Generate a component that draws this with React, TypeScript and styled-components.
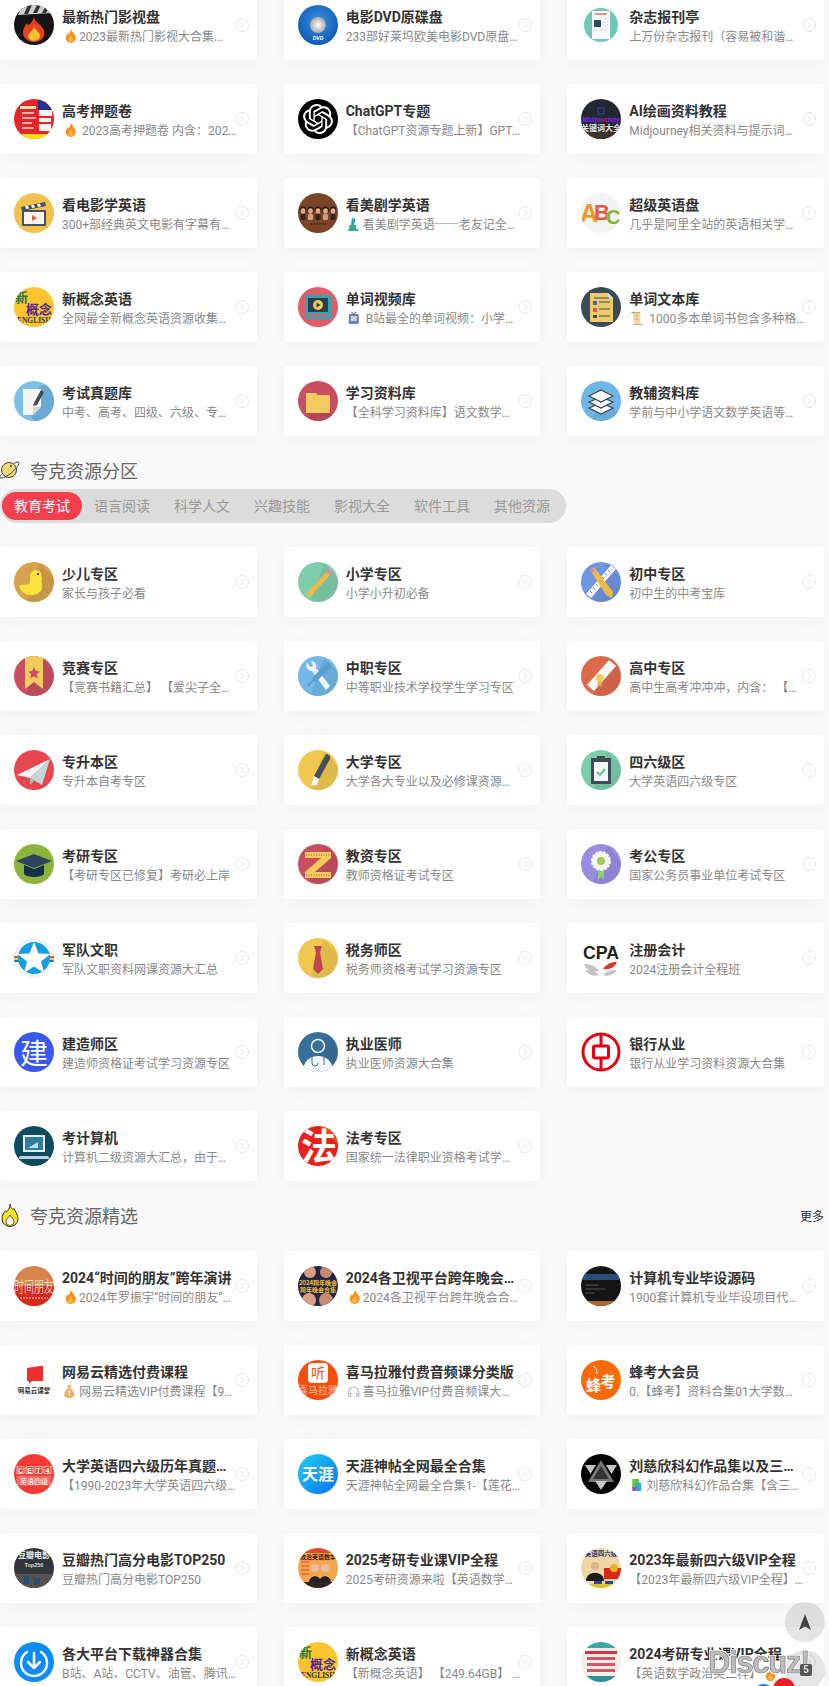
import React from 'react';
import styled, { createGlobalStyle } from 'styled-components';
import { SiOpenai } from 'react-icons/si';

const GlobalStyle = createGlobalStyle`
  html, body {
    margin: 0;
    height: 1686px;
    overflow: hidden;
    background: #f9f9f9;
    font-family: Roboto, "Noto Sans CJK SC", sans-serif;
  }
`;

const Page = styled.div`
  width: 824px;
  margin-top: -10px;
`;

const Grid = styled.div<{ $top?: number }>`
  display: grid;
  grid-template-columns: repeat(3, 1fr);
  column-gap: 27px;
  row-gap: 24px;
  margin-top: ${(p) => p.$top ?? 0}px;
`;

const Card = styled.a`
  display: flex;
  align-items: center;
  box-sizing: border-box;
  height: 70px;
  padding: 0 8px 0 14px;
  background: #fff;
  border-radius: 4px;
  box-shadow: 0 4px 16px rgba(0, 0, 0, 0.035);
`;

const Logo = styled.svg`
  flex: none;
  width: 40px;
  height: 40px;
  border-radius: 50%;
  margin-right: 8px;
`;

const Body = styled.div`
  flex: none;
  width: 175px;
  margin-right: -4px;
  padding-top: 4px;
`;

const Title = styled.div`
  font-size: 14px;
  line-height: 20px;
  font-weight: 700;
  color: #333;
  white-space: nowrap;
  overflow: hidden;
  text-overflow: ellipsis;
`;

const Desc = styled.div`
  font-size: 12px;
  line-height: 20px;
  color: #888;
  white-space: nowrap;
  overflow: hidden;
  text-overflow: ellipsis;
`;

const Emoji = styled.svg`
  display: inline-block;
  width: 17px;
  height: 14px;
  vertical-align: -2px;
`;

const Chevron = styled.svg`
  flex: none;
  width: 14px;
  height: 14px;
  margin-left: auto;
`;

const Heading = styled.div`
  display: flex;
  align-items: center;
  height: 20px;
  margin-top: 24px;
`;

const HeadingIcon = styled.svg`
  flex: none;
  width: 20px;
  height: 20px;
  margin-right: 10px;
  overflow: visible;
`;

const HeadingText = styled.span`
  font-size: 18px;
  color: #666;
`;

const More = styled.a`
  margin-left: auto;
  font-size: 12px;
  color: #333;
`;

const Tabs = styled.div`
  display: inline-flex;
  margin-top: 9px;
  padding: 3px 3.5px 3px 2px;
  background: #dcdcdc;
  border-radius: 17px;
  vertical-align: top;
`;

const Tab = styled.a<{ $active?: boolean }>`
  padding: 0 12px;
  height: 28px;
  line-height: 28px;
  font-size: 14px;
  border-radius: 14px;
  color: ${(p) => (p.$active ? '#fff' : '#999')};
  background: ${(p) => (p.$active ? '#f43f4f' : 'transparent')};
`;

const FloatCircle = styled.div<{ $top: number }>`
  position: fixed;
  right: 4px;
  top: ${(p) => p.$top}px;
  width: 40px;
  height: 40px;
  border-radius: 50%;
  background: rgba(0, 0, 0, 0.1);
  display: flex;
  align-items: center;
  justify-content: center;
`;

const Dot = styled.div<{ $left: number; $top: number; $size: number; $color: string }>`
  position: fixed;
  left: ${(p) => p.$left}px;
  top: ${(p) => p.$top}px;
  width: ${(p) => p.$size}px;
  height: ${(p) => p.$size}px;
  border-radius: 50%;
  background: ${(p) => p.$color};
`;

const Watermark = styled.div`
  position: fixed;
  left: 708px;
  top: 1643px;
  font-family: "Liberation Sans", sans-serif;
  font-size: 31px;
  line-height: 40px;
  font-weight: 700;
  letter-spacing: -1.3px;
  color: #bdbdbd;
  -webkit-text-stroke: 0.6px #777;
  text-shadow: 1px 1px 0 #fff, -1px -1px 0 #fff, 1px -1px 0 #fff, -1px 1px 0 #fff;
`;

const WatermarkBadge = styled.div`
  position: fixed;
  left: 800px;
  top: 1664px;
  width: 12px;
  height: 12px;
  border-radius: 2px;
  background: #555;
  color: #ddd;
  font: 700 10px/12px "Liberation Sans", sans-serif;
  text-align: center;
`;

const FireMark = styled.svg`
  position: fixed;
  left: 765px;
  top: 1668px;
  width: 11px;
  height: 13px;
`;

const cjk = '"Noto Sans CJK SC", sans-serif';
const Shade = () => <path d="M26 2L40 16V40H12Z" fill="#000" opacity=".07" />;

const flame = (
  <>
    <path d="M5.5 0C6.5 3 10.5 5 10.5 9A5 5 0 0 1 .5 9C.5 7 1.5 6 2.5 4.2 3.2 5 3.8 5 4.2 4 4.8 3 5.5 1.5 5.5 0Z" fill="#f7901e" />
    <path d="M5.5 6C6 7.5 8 8.5 8 10.5A2.5 2.5 0 0 1 3 10.5C3 9 5 8 5.5 6Z" fill="#fcb445" />
  </>
);

const logos: Record<string, React.ReactNode> = {
  clapper: (
    <>
      <rect width="40" height="40" fill="#141414" />
      <path d="M4 10L8 0H36L38 8Z" fill="#cfcfcf" />
      <path d="M10 9L14 0H18L14 9ZM19 8L23 0H27L23 8ZM28 8L32 0H36L32 8Z" fill="#333" />
      <path d="M20 12C21 18 27 19 30 25 32 33 26 37 20 37S9 33 9 27C9 23 11 21 13 18 14 20 15 20 16 19 18 17 19 15 20 12Z" fill="#e8401c" />
      <path d="M20 22C21 25 26 27 26 31A6 5 0 0 1 14 31C14 28 19 26 20 22Z" fill="#fbc02d" />
    </>
  ),
  dvd: (
    <>
      <defs>
        <radialGradient id="dvdbg" cx=".5" cy=".4" r=".65">
          <stop offset="0" stopColor="#3b8fe0" />
          <stop offset="1" stopColor="#0a56b0" />
        </radialGradient>
        <radialGradient id="dvdhub">
          <stop offset="0" stopColor="#fff" />
          <stop offset="1" stopColor="#a9a9a9" />
        </radialGradient>
      </defs>
      <rect width="40" height="40" fill="url(#dvdbg)" />
      <circle cx="20" cy="20" r="8" fill="url(#dvdhub)" />
      <text x="20" y="35" textAnchor="middle" fontSize="5" fontWeight="700" fontStyle="italic" fill="#fff" fontFamily="Liberation Sans">DVD</text>
    </>
  ),
  news: (
    <>
      <rect width="40" height="40" fill="#fff" />
      <circle cx="20" cy="20" r="17" fill="#6ec8b9" />
      <rect x="11" y="6" width="18" height="28" fill="#fafafa" />
      <rect x="14" y="8" width="12" height="2" fill="#ef8d7e" />
      <rect x="13" y="15" width="7" height="7" fill="#2f4858" />
      <path d="M22 14h5M22 17h5M22 20h5M13 25h14" stroke="#d8e0e6" />
    </>
  ),
  poster: (
    <>
      <rect width="40" height="40" fill="#e8232a" />
      <rect x="24" width="16" height="11" fill="#27308a" />
      <path d="M25 11h13v6H25zM25 19h12v4H25zM25 25h12v7H25z" fill="#f3f3f3" />
      <path d="M6 7h16v3H6z" fill="#fde7a0" />
      <path d="M8 13h12v2H8zM8 18h14v2H8zM8 23h10v2H8zM8 28h12v2H8z" fill="#f8b0a8" />
      <rect x="6" y="35" width="28" height="5" fill="#ffe000" />
    </>
  ),
  gpt: (
    <>
      <rect width="40" height="40" fill="#000" />
      <SiOpenai x="5" y="5" size="30" color="#fff" />
    </>
  ),
  mj: (
    <>
      <rect width="40" height="40" fill="#222730" />
      <rect y="30" width="40" height="10" fill="#3a342c" />
      <path d="M17 9h6v6h-6z" fill="none" stroke="#3546b8" />
      <text x="20" y="23" textAnchor="middle" fontSize="7" fontWeight="700" fill="#a01de0" fontFamily="Liberation Sans">Midjourney</text>
      <text x="20" y="32" textAnchor="middle" fontSize="8" fontWeight="700" fill="#eee" fontFamily={cjk}>关键词大全</text>
    </>
  ),
  film: (
    <>
      <rect width="40" height="40" fill="#efc24e" />
      <rect x="8" y="17" width="24" height="16" rx="1" fill="#45525e" />
      <rect x="10" y="19" width="20" height="12" fill="#fdf6ec" />
      <path d="M18 22l5 3-5 3Z" fill="#e8534a" />
      <path d="M7 14l24-5 1 4-24 5Z" fill="#45525e" />
      <path d="M11 13l3-.6 1 3-3 .6ZM17 12l3-.6 1 3-3 .6ZM23 11l3-.6 1 3-3 .6Z" fill="#f4f4f4" />
    </>
  ),
  friends: (
    <>
      <rect width="40" height="40" fill="#7b4427" />
      {[5, 12.5, 20, 27.5, 35].map((x, i) => (
        <g key={x}>
          <circle cx={x} cy={17} r={3.4} fill="#2a1a12" />
          <ellipse cx={x} cy={18} rx={2.4} ry={2.800} fill="#dcab84" />
          <rect x={x - 2.600} y={21} width={5.200} height={6} rx={1.500} fill={i % 2 ? '#c9a27c' : '#3c241a'} />
        </g>
      ))}
      <path d="M12 31h16" stroke="#2a1a12" strokeDasharray="2 1" />
    </>
  ),
  abc: (
    <>
      <rect width="40" height="40" fill="#f3f3f3" />
      <text x="-1" y="29" fontSize="25" fontWeight="700" fill="#f0962a" fontFamily="Liberation Sans">A</text>
      <text x="13" y="27" fontSize="22" fontWeight="700" fill="#e8584a" fontFamily="Liberation Sans">B</text>
      <text x="25" y="31" fontSize="20" fontWeight="700" fill="#7cbb2c" fontFamily="Liberation Sans">C</text>
    </>
  ),
  nce: (
    <>
      <rect width="40" height="40" fill="#fcc52f" />
      <text x="1" y="15" fontSize="13" fontWeight="700" fill="#1f7a4a" fontFamily={cjk}>新</text>
      <text x="12" y="27" fontSize="13" fontWeight="700" fill="#4a2a8a" fontFamily={cjk}>概念</text>
      <text x="20" y="36" textAnchor="middle" fontSize="7.500" fontWeight="700" fill="#333" fontFamily="Liberation Serif">ENGLISH</text>
    </>
  ),
  wordvideo: (
    <>
      <rect width="40" height="40" fill="#e15c6a" />
      <rect x="7" y="8" width="26" height="24" rx="1" fill="#36a3ad" />
      <rect x="10" y="11" width="20" height="14" fill="#2b3e50" />
      <circle cx="20" cy="18" r="5" fill="#f1c959" />
      <path d="M18.5 15.5l4 2.5-4 2.5Z" fill="#2b3e50" />
      <path d="M10 28h20" stroke="#e15c6a" strokeWidth="2" />
    </>
  ),
  wordtext: (
    <>
      <rect width="40" height="40" fill="#3a4a57" />
      <path d="M9 6h18l5 5v24H9Z" fill="#f0ca66" />
      <path d="M27 6l5 5h-5Z" fill="#cfe3f1" />
      <path d="M12 14h4v4h-4z" fill="#3a6ea8" />
      <path d="M12 21h4v4h-4z" fill="#e8534a" />
      <path d="M12 28h4v3h-4z" fill="#33495c" />
      <path d="M18 15h11M18 22h11M18 29h11M13 11h15" stroke="#33495c" strokeWidth="1.2" />
    </>
  ),
  exam: (
    <>
      <rect width="40" height="40" fill="#7cc0e8" />
      <path d="M14 30L26 4H40V40H20Z" fill="#6aa9d4" />
      <path d="M9 8h18v18l-8 8H9Z" fill="#f5f5f5" />
      <path d="M19 34v-8h8Z" fill="#d5d5d5" />
      <path d="M20 22l7-13 3 2-7 13-4 1Z" fill="#3e4850" />
    </>
  ),
  folder: (
    <>
      <rect width="40" height="40" fill="#c94f60" />
      <path d="M8 30L32 32 40 40H14Z" fill="#000" opacity=".1" />
      <path d="M8 12h10l2 2h12v18H8Z" fill="#f3ca5e" />
    </>
  ),
  books: (
    <>
      <rect width="40" height="40" fill="#6eb6e6" />
      <path d="M20 20L40 32V40H10Z" fill="#000" opacity=".06" />
      <g fill="#f5f7f8" stroke="#3e4850" strokeWidth="1.200">
        <path d="M8 27l12-5 12 5-12 6Z" />
        <path d="M8 21l12-5 12 5-12 6Z" />
        <path d="M8 15l12-6 12 6-12 6Z" />
      </g>
    </>
  ),
  duck: (
    <>
      <rect width="40" height="40" fill="#d6a24e" />
      <Shade />
      <path d="M5 24C7 22 11 23 15 22 17 20 16 17 16 14A6 6 0 0 1 28 14C28 17 27 19 28 22 30 30 22 34 15 33 10 32 6 28 5 24Z" fill="#fbe33b" />
      <path d="M27 12l5 1-4 3Z" fill="#ee7b2c" />
      <circle cx="24" cy="12" r="1" fill="#222" />
    </>
  ),
  pencil: (
    <>
      <rect width="40" height="40" fill="#7fcdab" />
      <Shade />
      <path d="M28 10l4 3-18 20-6 3 2-6Z" fill="#ecbb45" />
      <path d="M28 10l3-3 4 3-3 3Z" fill="#e889a8" />
    </>
  ),
  ruler: (
    <>
      <rect width="40" height="40" fill="#6e95e2" />
      <Shade />
      <path d="M30 3l5 4L10 36l-5-4Z" fill="#f4f4f4" />
      <path d="M27 8l2 2M24 11.500l2 2M21 15l2 2M18 18.500l2 2M15 22l2 2M12 25.500l2 2M9 29l2 2" stroke="#7a8aa0" />
      <path d="M9 8l4-3 19 25-1 6-6-3Z" fill="#ecbb45" />
      <path d="M9 8l3-2 2 3-3 2Z" fill="#e889a8" />
    </>
  ),
  medal: (
    <>
      <rect width="40" height="40" fill="#c94f60" />
      <Shade />
      <path d="M11 0h18v33l-9-7-9 7Z" fill="#f3ca5e" />
      <path d="M20 11l1.8 4 4.2.4-3.2 2.8 1 4.2-3.8-2.2-3.8 2.2 1-4.2-3.2-2.8 4.2-.4Z" fill="#c94f60" />
    </>
  ),
  tools: (
    <>
      <rect width="40" height="40" fill="#72b9e9" />
      <Shade />
      <path d="M9 6l3 5 3-1-2-5C17 5 19 9 18 12L32 30 28 34 14 15C10 15 7 11 9 6Z" fill="#f5f5f5" />
      <path d="M30 6l4 4-16 16-3-1-4 6-2-2 6-5-1-2Z" fill="#5a9dd0" />
    </>
  ),
  diploma: (
    <>
      <rect width="40" height="40" fill="#de6a4c" />
      <Shade />
      <path d="M28 4l7 6L13 35l-7-6Z" fill="#fbfbfb" />
      <circle cx="19" cy="22" r="4" fill="#f3ca5e" />
      <path d="M17 25l-1 6 3-2 2 2-1-6Z" fill="#ecbb45" />
    </>
  ),
  plane: (
    <>
      <rect width="40" height="40" fill="#e8464e" />
      <path d="M3 25L36 9 16 28Z" fill="#f2f6f5" />
      <path d="M16 28L36 9 28 35Z" fill="#bfd9d8" />
      <path d="M16 28v7l4-4Z" fill="#9cc0bf" />
    </>
  ),
  pen: (
    <>
      <rect width="40" height="40" fill="#f0c850" />
      <Shade />
      <path d="M28 4c3 0 5 2 4 5L21 29l-5-3Z" fill="#46505c" />
      <path d="M16 26l5 3-2 6-6 1Z" fill="#f7f7f7" />
    </>
  ),
  clip: (
    <>
      <rect width="40" height="40" fill="#7bcca9" />
      <Shade />
      <rect x="10" y="8" width="20" height="26" fill="#3e4a56" />
      <rect x="13" y="12" width="14" height="19" fill="#f6f7f7" />
      <rect x="16" y="6" width="8" height="4" fill="#3e4a56" />
      <path d="M16 22l3 3 5-6" fill="none" stroke="#62c39a" strokeWidth="2" />
    </>
  ),
  cap: (
    <>
      <rect width="40" height="40" fill="#8db43a" />
      <path d="M2 17L20 10 38 17 20 24Z" fill="#2c4560" />
      <path d="M10 21v9c3 4 17 4 20 0v-9l-10 4Z" fill="#16304a" />
    </>
  ),
  zed: (
    <>
      <rect width="40" height="40" fill="#c94f60" />
      <Shade />
      <path d="M7 8h26v6L17 28h16v6H7v-6L23 14H7Z" fill="#f3ca5e" />
      <path d="M8 11h24M8 31h24" stroke="#8a5a30" strokeWidth="1" strokeDasharray="1 1.5" />
    </>
  ),
  flower: (
    <>
      <rect width="40" height="40" fill="#9b8be2" />
      <Shade />
      <path d="M17 24v12l3-3 3 3V24Z" fill="#8ecb7a" />
      <circle cx="20" cy="17" r="9" fill="#f6f6f6" stroke="#f6f6f6" strokeWidth="2" strokeDasharray="3 1" />
      <circle cx="20" cy="17" r="4" fill="#9fc95a" />
    </>
  ),
  star: (
    <>
      <rect width="40" height="40" fill="#f3f3f3" />
      <path d="M0 18h40v2H0z" fill="#e8534a" />
      <path d="M0 20h40v2H0z" fill="#f3ca5e" />
      <path d="M0 22h40v2H0z" fill="#2f6fb0" />
      <circle cx="20" cy="20" r="16" fill="#149fe0" />
      <path d="M20 4l4.500 11.500 12 .6-9.500 7.500 3.200 11.400L20 28.500 9.800 35l3.200-11.400-9.500-7.500 12-.6Z" fill="#fff" />
    </>
  ),
  tie: (
    <>
      <rect width="40" height="40" fill="#f0c850" />
      <Shade />
      <path d="M16 8h8l-2 6 3 17-5 5-5-5 3-17Z" fill="#c0444f" />
    </>
  ),
  cpa: (
    <>
      <rect width="40" height="40" fill="#fff" />
      <text x="20" y="21" textAnchor="middle" fontSize="18" fontWeight="700" fill="#222" fontFamily="Liberation Sans" textLength="36" lengthAdjust="spacingAndGlyphs">CPA</text>
      <path d="M22 31c4-6 9-7 14-7-2 5-7 8-14 7Z" fill="#d8362a" />
      <path d="M18 33C14 27 9 26 3 26c2 6 8 9 15 7ZM22 37c4-4 8-5 14-5-2 4-8 7-14 5ZM18 37c-4-4-8-5-14-5 2 4 8 7 14 5Z" fill="#c4c4c4" />
    </>
  ),
  jian: (
    <>
      <rect width="40" height="40" fill="#3858ee" />
      <path d="M0 0h10L0 14Z" fill="#f3ca5e" />
      <text x="20" y="32" textAnchor="middle" fontSize="28" fill="#fff" fontFamily={cjk}>建</text>
    </>
  ),
  doctor: (
    <>
      <rect width="40" height="40" fill="#36709c" />
      <Shade />
      <circle cx="20" cy="14" r="6.500" fill="#36709c" stroke="#f2f5f7" strokeWidth="1.500" />
      <path d="M5 40c0-12 8-16 15-16s15 4 15 16Z" fill="#f4f6f8" />
      <path d="M14 25v6a3 3 0 0 0 6 0M26 25v8" stroke="#36709c" fill="none" />
    </>
  ),
  boc: (
    <>
      <rect width="40" height="40" fill="#fff" />
      <circle cx="20" cy="20" r="18" fill="none" stroke="#e60012" strokeWidth="3" />
      <path d="M20 2v36" stroke="#e60012" strokeWidth="3" />
      <rect x="12.500" y="14" width="15" height="12" rx="1.500" fill="#fff" stroke="#e60012" strokeWidth="3" />
    </>
  ),
  pc: (
    <>
      <rect width="40" height="40" fill="#0e4a60" />
      <rect x="9" y="9" width="22" height="17" fill="#e6eef2" />
      <rect x="11" y="11" width="18" height="13" fill="#2e7d9c" />
      <path d="M14 22l10-6v6Z" fill="#bcdde9" />
      <path d="M6 30h28l2 3H4Z" fill="#b7d2dc" />
    </>
  ),
  law: (
    <>
      <rect width="40" height="40" fill="#e8201c" />
      <path d="M22 0h18v18Z" fill="#f34a1c" />
      <text x="21" y="34" textAnchor="middle" fontSize="36" fontWeight="700" fill="#fff" fontFamily={cjk}>法</text>
    </>
  ),
  timefriend: (
    <>
      <rect width="40" height="40" fill="#d8844c" />
      <rect y="20" width="40" height="20" fill="#d8281c" />
      <text x="20" y="26" textAnchor="middle" fontSize="15" fontWeight="300" fill="#fff" fontFamily={cjk} textLength="40" lengthAdjust="spacingAndGlyphs">时间朋友</text>
      <path d="M6 32h28" stroke="#fbd4c4" strokeDasharray="2 1" />
    </>
  ),
  gala: (
    <>
      <rect width="40" height="40" fill="#23264c" />
      <circle cx="12" cy="6" r="6" fill="#d8a080" />
      <circle cx="28" cy="6" r="6" fill="#c88a70" />
      <circle cx="11" cy="34" r="7" fill="#d8a080" />
      <circle cx="28" cy="34" r="7" fill="#c88a70" />
      <text x="20" y="19" textAnchor="middle" fontSize="6" fontWeight="700" fill="#f3c12e" fontFamily={cjk}>2024跨年晚会</text>
      <text x="20" y="26" textAnchor="middle" fontSize="6" fontWeight="700" fill="#f3c12e" fontFamily={cjk}>跨年晚会合集</text>
    </>
  ),
  code: (
    <>
      <rect width="40" height="40" fill="#141414" />
      <rect y="8" width="40" height="6" fill="#26507a" />
      <path d="M4 19h14M4 23h20M4 27h10" stroke="#555" />
      <rect y="35" width="40" height="5" fill="#a86a2a" />
    </>
  ),
  netease: (
    <>
      <rect width="40" height="40" fill="#fff" />
      <circle cx="20" cy="20" r="19.500" fill="none" stroke="#f2f2f2" />
      <path d="M13 8l13-2h3v15H18l-3 3v-3h-2Z" fill="#ef2d2d" />
      <text x="20" y="33" textAnchor="middle" fontSize="6.500" fontWeight="700" fill="#333" fontFamily={cjk}>网易云课堂</text>
    </>
  ),
  xima: (
    <>
      <rect width="40" height="40" fill="#fb4b0e" />
      <rect x="10" y="3" width="20" height="20" rx="4" fill="#fff" />
      <text x="20" y="18" textAnchor="middle" fontSize="14" fill="#fb4b0e" fontFamily={cjk}>听</text>
      <text x="20" y="34" textAnchor="middle" fontSize="10" fill="#ffc9b0" fontFamily={cjk}>喜马拉雅</text>
    </>
  ),
  feng: (
    <>
      <rect width="40" height="40" fill="#fa6a05" />
      <path d="M12 6c3 1 4 4 4 8" fill="none" stroke="#fff" />
      <text x="12.500" y="31" textAnchor="middle" fontSize="15" fontWeight="700" fill="#fff" fontFamily={cjk}>蜂</text>
      <text x="27" y="27" textAnchor="middle" fontSize="15" fontWeight="700" fill="#fff" fontFamily={cjk}>考</text>
    </>
  ),
  cet: (
    <>
      <rect width="40" height="40" fill="#f53a33" />
      <path d="M3 12.500h7v7H3zM12 12.500h7v7h-7zM21 12.500h7v7h-7zM30 12.500h7v7h-7z" fill="none" stroke="#fff" strokeWidth=".7" />
      {['C', 'E', 'T', '4'].map((c, i) => (
        <text key={c} x={6.500 + i * 9} y={18.500} textAnchor="middle" fontSize="7" fontWeight="700" fill="#fff" fontFamily="Liberation Sans">{c}</text>
      ))}
      <rect x="3" y="22" width="34" height="9" fill="#fbd8d4" opacity=".3" stroke="#fff" strokeWidth=".6" />
      <text x="20" y="29.500" textAnchor="middle" fontSize="7" fill="#fff" fontFamily={cjk}>英语四级</text>
    </>
  ),
  tianya: (
    <>
      <defs>
        <linearGradient id="tianyabg" x1="0" y1="0" x2="1" y2="1">
          <stop offset="0" stopColor="#1fd0f0" />
          <stop offset="1" stopColor="#0a6ff5" />
        </linearGradient>
      </defs>
      <rect width="40" height="40" fill="url(#tianyabg)" />
      <text x="20" y="26" textAnchor="middle" fontSize="16" fontWeight="700" fill="#fff" fontFamily={cjk}>天涯</text>
    </>
  ),
  liu: (
    <>
      <rect width="40" height="40" fill="#000" />
      <path d="M20 6L33 28H7Z" fill="#777" />
      <path d="M20 12L28 25H12Z" fill="#333" />
      <path d="M4 11h11L9.500 20ZM36 11H25L30.500 20ZM14 27h12L20 36Z" fill="#c4c4c4" />
    </>
  ),
  douban: (
    <>
      <rect width="40" height="40" fill="#33363c" />
      <rect y="26" width="40" height="14" fill="#55534e" />
      <path d="M10 28h5v8h-5zM20 30h6v7h-6z" fill="#294e7e" />
      <text x="20" y="10" textAnchor="middle" fontSize="8" fontWeight="700" fill="#eee" fontFamily={cjk}>豆瓣电影</text>
      <text x="20" y="19" textAnchor="middle" fontSize="5.500" fontWeight="700" fill="#ddd" fontFamily="Liberation Sans">Top250</text>
    </>
  ),
  ky25: (
    <>
      <rect width="40" height="40" fill="#f4a550" />
      <rect width="40" height="5" fill="#e0472c" />
      <text x="20" y="11" textAnchor="middle" fontSize="6" fontWeight="700" fill="#3a1a10" fontFamily={cjk}>政治英语数学</text>
      <path d="M3 14h8M3 18h8M3 22h8M3 26h8" stroke="#e0472c" />
      <circle cx="17" cy="20" r="4" fill="#e8bd9a" />
      <circle cx="27" cy="20" r="4" fill="#e8bd9a" />
      <path d="M11 35c0-9 12-9 12 0ZM21 35c0-9 12-9 12 0Z" fill="#222" />
      <rect y="34" width="40" height="6" fill="#2c2626" />
    </>
  ),
  ky6: (
    <>
      <rect width="40" height="40" fill="#efd6a8" />
      <text x="20" y="8" textAnchor="middle" fontSize="6.500" fontWeight="700" fill="#2c3a6a" fontFamily={cjk}>英语四六级</text>
      <circle cx="14" cy="18" r="4" fill="#e0b088" />
      <path d="M5 33c0-11 18-11 18 0Z" fill="#1c1c1c" />
      <rect x="23" y="20" width="17" height="11" fill="#d8281c" />
      <circle cx="33" cy="20" r="4" fill="#e3b32a" />
      <path d="M13 33h8v3h-8zM24 33h8v3h-8z" fill="#2c4a9a" />
      <rect y="36" width="40" height="4" fill="#e3c02a" />
    </>
  ),
  download: (
    <>
      <rect width="40" height="40" fill="#0d8cf8" />
      <path d="M13 10a13 13 0 1 0 14 0" fill="none" stroke="#fff" strokeWidth="2.500" strokeLinecap="round" />
      <path d="M20 11v15M14 20l6 6 6-6" fill="none" stroke="#fff" strokeWidth="2.500" strokeLinecap="round" strokeLinejoin="round" />
    </>
  ),
  ky24: (
    <>
      <rect width="40" height="40" fill="#f4ece6" />
      <rect width="40" height="6" fill="#43a6a8" />
      <path d="M4 9h32v3H4z" fill="#c8374a" />
      <path d="M6 15h28v3H6zM6 21h28v3H6zM6 27h28v3H6z" fill="#d0566a" />
      <rect y="34" width="40" height="6" fill="#2f8f96" />
    </>
  ),
};

const emojis: Record<string, React.ReactNode> = {
  fire: <g transform="translate(3)">{flame}</g>,
  statue: (
    <g fill="#35a79a">
      <path d="M6 0l1 2 2-1v3l-1 2v2h2v5H3V8h2V5Z" />
      <rect x="2" y="12" width="10" height="2" />
    </g>
  ),
  tv: (
    <>
      <rect x="2.500" y="3" width="10" height="10" rx="1.500" fill="#6a7fae" />
      <rect x="4.500" y="5" width="6" height="5" fill="#c8d4e6" />
      <path d="M5 1l2.500 2L10 1" stroke="#556" fill="none" />
    </>
  ),
  scroll: (
    <>
      <path d="M3 1h8v12H5Z" fill="#f0d8a8" />
      <path d="M4 13h9v1H4zM2 1h9v1H2z" fill="#d6a860" />
      <path d="M6 5h3M6 8h3" stroke="#d6a860" />
    </>
  ),
  bag: (
    <>
      <path d="M5 1h4L8 4c3 2 4 5 4 7 0 2-2 3-5 3s-5-1-5-3c0-2 1-5 4-7Z" fill="#e8b060" />
      <path d="M7 6v6M5.500 8h3" stroke="#fff" />
    </>
  ),
  phones: <path d="M2.500 11V8a5 5 0 0 1 10 0v3M2.500 9.500v3h2v-3ZM10.500 9.500v3h2v-3Z" fill="none" stroke="#b8b8cc" strokeWidth="1.200" />,
  book: (
    <>
      <rect x="3" y="1" width="7" height="9" fill="#6cc040" />
      <rect x="6" y="5" width="6" height="8" fill="#2ea4e0" />
      <rect x="3" y="9" width="4" height="4" fill="#8f5ab8" />
    </>
  ),
};

type Item = { icon: string; title: string; desc: string; emoji?: string };

const topItems: Item[] = [
  { icon: 'clapper', title: '最新热门影视盘', emoji: 'fire', desc: '2023最新热门影视大合集...' },
  { icon: 'dvd', title: '电影DVD原碟盘', desc: '233部好莱坞欧美电影DVD原盘合集资源' },
  { icon: 'news', title: '杂志报刊亭', desc: '上万份杂志报刊（容易被和谐，请及时保存）' },
  { icon: 'poster', title: '高考押题卷', emoji: 'fire', desc: ' 2023高考押题卷 内含：2023全国卷' },
  { icon: 'gpt', title: 'ChatGPT专题', desc: '【ChatGPT资源专题上新】GPT4教程' },
  { icon: 'mj', title: 'AI绘画资料教程', desc: 'Midjourney相关资料与提示词大全合集' },
  { icon: 'film', title: '看电影学英语', desc: '300+部经典英文电影有字幕有声音资源' },
  { icon: 'friends', title: '看美剧学英语', emoji: 'statue', desc: '看美剧学英语──老友记全集资源合集' },
  { icon: 'abc', title: '超级英语盘', desc: '几乎是阿里全站的英语相关学习资源' },
  { icon: 'nce', title: '新概念英语', desc: '全网最全新概念英语资源收集整理合集' },
  { icon: 'wordvideo', title: '单词视频库', emoji: 'tv', desc: ' B站最全的单词视频：小学到大学' },
  { icon: 'wordtext', title: '单词文本库', emoji: 'scroll', desc: ' 1000多本单词书包含多种格式' },
  { icon: 'exam', title: '考试真题库', desc: '中考、高考、四级、六级、专四专八' },
  { icon: 'folder', title: '学习资料库', desc: '【全科学习资料库】语文数学英语全科' },
  { icon: 'books', title: '教辅资料库', desc: '学前与中小学语文数学英语等教辅资料' },
];

const zoneItems: Item[] = [
  { icon: 'duck', title: '少儿专区', desc: '家长与孩子必看' },
  { icon: 'pencil', title: '小学专区', desc: '小学小升初必备' },
  { icon: 'ruler', title: '初中专区', desc: '初中生的中考宝库' },
  { icon: 'medal', title: '竞赛专区', desc: '【竞赛书籍汇总】 【爱尖子全集资源】' },
  { icon: 'tools', title: '中职专区', desc: '中等职业技术学校学生学习专区' },
  { icon: 'diploma', title: '高中专区', desc: '高中生高考冲冲冲，内含： 【高考资料】' },
  { icon: 'plane', title: '专升本区', desc: '专升本自考专区' },
  { icon: 'pen', title: '大学专区', desc: '大学各大专业以及必修课资源汇总合集' },
  { icon: 'clip', title: '四六级区', desc: '大学英语四六级专区' },
  { icon: 'cap', title: '考研专区', desc: '【考研专区已修复】考研必上岸' },
  { icon: 'zed', title: '教资专区', desc: '教师资格证考试专区' },
  { icon: 'flower', title: '考公专区', desc: '国家公务员事业单位考试专区' },
  { icon: 'star', title: '军队文职', desc: '军队文职资料网课资源大汇总' },
  { icon: 'tie', title: '税务师区', desc: '税务师资格考试学习资源专区' },
  { icon: 'cpa', title: '注册会计', desc: '2024注册会计全程班' },
  { icon: 'jian', title: '建造师区', desc: '建造师资格证考试学习资源专区' },
  { icon: 'doctor', title: '执业医师', desc: '执业医师资源大合集' },
  { icon: 'boc', title: '银行从业', desc: '银行从业学习资料资源大合集' },
  { icon: 'pc', title: '考计算机', desc: '计算机二级资源大汇总，由于内容较多' },
  { icon: 'law', title: '法考专区', desc: '国家统一法律职业资格考试学习资料' },
];

const pickItems: Item[] = [
  { icon: 'timefriend', title: '2024“时间的朋友”跨年演讲', emoji: 'fire', desc: '2024年罗振宇“时间的朋友”跨年演讲' },
  { icon: 'gala', title: '2024各卫视平台跨年晚会合集', emoji: 'fire', desc: '2024各卫视平台跨年晚会合集' },
  { icon: 'code', title: '计算机专业毕设源码', desc: '1900套计算机专业毕设项目代码合集' },
  { icon: 'netease', title: '网易云精选付费课程', emoji: 'bag', desc: '网易云精选VIP付费课程【9000门】' },
  { icon: 'xima', title: '喜马拉雅付费音频课分类版', emoji: 'phones', desc: '喜马拉雅VIP付费音频课大合集' },
  { icon: 'feng', title: '蜂考大会员', desc: '0.【蜂考】资料合集01大学数学全集' },
  { icon: 'cet', title: '大学英语四六级历年真题合集', desc: '【1990-2023年大学英语四六级真题】' },
  { icon: 'tianya', title: '天涯神帖全网最全合集', desc: '天涯神帖全网最全合集1-【莲花宝典】' },
  { icon: 'liu', title: '刘慈欣科幻作品集以及三体全集', emoji: 'book', desc: '刘慈欣科幻作品合集【含三体全集】' },
  { icon: 'douban', title: '豆瓣热门高分电影TOP250', desc: '豆瓣热门高分电影TOP250' },
  { icon: 'ky25', title: '2025考研专业课VIP全程', desc: '2025考研资源来啦【英语数学政治】' },
  { icon: 'ky6', title: '2023年最新四六级VIP全程', desc: '【2023年最新四六级VIP全程】 【更新】' },
  { icon: 'download', title: '各大平台下载神器合集', desc: 'B站、A站、CCTV、油管、腾讯视频' },
  { icon: 'nce', title: '新概念英语', desc: '【新概念英语】 【249.64GB】 【全套】' },
  { icon: 'ky24', title: '2024考研专业课VIP全程', desc: '【英语数学政治英二样】' },
];

const tabs = ['教育考试', '语言阅读', '科学人文', '兴趣技能', '影视大全', '软件工具', '其他资源'];

function ResourceCard({ item }: { item: Item }) {
  return (
    <Card>
      <Logo viewBox="0 0 40 40">{logos[item.icon]}</Logo>
      <Body>
        <Title>{item.title}</Title>
        <Desc>
          {item.emoji && <Emoji viewBox="0 0 16.500 14">{emojis[item.emoji]}</Emoji>}
          {item.desc}
        </Desc>
      </Body>
      <Chevron viewBox="0 0 14 14">
        <circle cx="7" cy="7" r="6.400" fill="none" stroke="#e4e4e4" strokeWidth="1" />
        <path d="M5.500 3.800L8.700 7 5.500 10.200" fill="none" stroke="#e4e4e4" strokeWidth="1" />
      </Chevron>
    </Card>
  );
}

export default function App() {
  return (
    <>
      <GlobalStyle />
      <Page>
        <Grid>
          {topItems.map((it) => (
            <ResourceCard key={it.title} item={it} />
          ))}
        </Grid>

        <Heading>
          <HeadingIcon viewBox="0 0 20 20">
            <circle cx="9" cy="10" r="7.500" fill="#f7d774" stroke="#444" strokeWidth="1" />
            <path d="M14 3.500C17 1.500 19 1.500 19 3c0 2-4 7-9 11-5 3.500-9 5-10 3.500C-.5 16.500 1 14.500 3 13" fill="none" stroke="#444" strokeWidth="1" />
            <circle cx="11" cy="6" r="1" fill="#444" />
          </HeadingIcon>
          <HeadingText>夸克资源分区</HeadingText>
        </Heading>
        <Tabs>
          {tabs.map((t, i) => (
            <Tab key={t} $active={i === 0}>{t}</Tab>
          ))}
        </Tabs>
        <Grid $top={24}>
          {zoneItems.map((it) => (
            <ResourceCard key={it.title} item={it} />
          ))}
        </Grid>

        <Heading>
          <HeadingIcon viewBox="0 0 20 20">
            <path d="M10 -1C11 3 12 5 14 3.500c1 3 4 6 4 10.500A8 7.500 0 0 1 2 14C2 10 4 8 5.500 5.500 6.500 7 7 7 7.500 6 9 4 10 2 10 -1Z" fill="#fde21e" stroke="#333" strokeWidth="1" />
            <path d="M10 10c1 2.500 4 4 4 6.500a4 4 0 0 1-8 0c0-2.500 3-4 4-6.500Z" fill="#fff" stroke="#333" strokeWidth=".8" />
          </HeadingIcon>
          <HeadingText>夸克资源精选</HeadingText>
          <More>更多</More>
        </Heading>
        <Grid $top={26}>
          {pickItems.map((it) => (
            <ResourceCard key={it.title + it.icon} item={it} />
          ))}
        </Grid>
      </Page>

      <FloatCircle $top={1602}>
        <svg width="12" height="16" viewBox="0 0 12 16">
          <path d="M6 0L12 16 6 12.500 0 16Z" fill="#444" />
        </svg>
      </FloatCircle>
      <FloatCircle $top={1650} />
      <Dot $left={752} $top={1684} $size={23} $color="#1e88e5" />
      <Dot $left={773} $top={1678} $size={22} $color="#ee1c25" />
      <FireMark viewBox="0 0 11 14">{flame}</FireMark>
      <Watermark>Discuz!</Watermark>
      <WatermarkBadge>5</WatermarkBadge>
    </>
  );
}
